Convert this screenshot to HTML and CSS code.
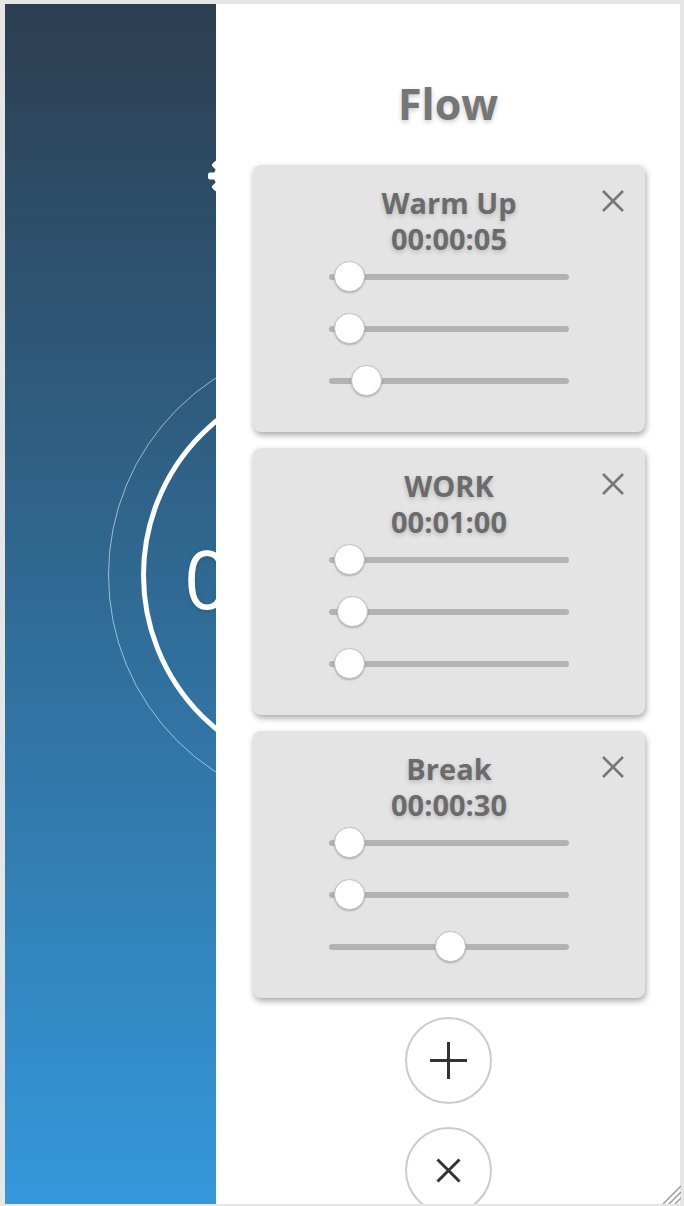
FILE: index.html
```html
<!DOCTYPE html>
<html lang="en">
<head>
  <meta charset="UTF-8" />
  <meta name="viewport" content="width=device-width, initial-scale=1.0" />
  <title>Flow Timer</title>
  <link rel="stylesheet" href="styles.css">
</head>
<body>
  <div class="frame">
    <div class="screen">
      <main class="timer-view">
        <div class="toolbar">
          <svg class="tool-icon" viewBox="0 0 40 40" width="40" height="40">
            <g fill="#fff">
              <circle cx="20" cy="20" r="13" />
              <rect x="16.5" y="1" width="7" height="9" rx="2" />
              <rect x="16.5" y="30" width="7" height="9" rx="2" />
              <rect x="1" y="16.5" width="9" height="7" rx="2" />
              <rect x="30" y="16.5" width="9" height="7" rx="2" />
              <rect x="16.5" y="1" width="7" height="9" rx="2" transform="rotate(45 20 20)" />
              <rect x="16.5" y="30" width="7" height="9" rx="2" transform="rotate(45 20 20)" />
              <rect x="1" y="16.5" width="9" height="7" rx="2" transform="rotate(45 20 20)" />
              <rect x="30" y="16.5" width="9" height="7" rx="2" transform="rotate(45 20 20)" />
            </g>
            <circle cx="20" cy="20" r="5.5" fill="#2e4459" />
          </svg>
          <svg class="tool-icon" viewBox="0 0 40 40" width="40" height="40">
            <path d="M13 8 L32 20 L13 32 Z" fill="#fff" />
          </svg>
          <svg class="tool-icon" viewBox="0 0 40 40" width="40" height="40">
            <path d="M8 12 H32 M8 20 H32 M8 28 H32" stroke="#fff" stroke-width="3" stroke-linecap="round" />
          </svg>
        </div>
        <div class="dial">
          <div class="dial-ring">
            <span class="clock">00:00:05</span>
          </div>
        </div>
      </main>

      <aside class="drawer">
        <h1 class="drawer-title">Flow</h1>

        <div class="step-list">
          <section class="step">
            <button class="step-close" aria-label="Remove">
              <svg viewBox="0 0 24 24" width="24" height="24"><path d="M2 2 L22 22 M22 2 L2 22" /></svg>
            </button>
            <h2 class="step-name">Warm Up</h2>
            <div class="step-time">00:00:05</div>
            <div class="sliders">
              <div class="slider"><div class="slider-track"></div><div class="slider-thumb" style="left: 5px"></div></div>
              <div class="slider"><div class="slider-track"></div><div class="slider-thumb" style="left: 5px"></div></div>
              <div class="slider"><div class="slider-track"></div><div class="slider-thumb" style="left: 21.9px"></div></div>
            </div>
          </section>

          <section class="step">
            <button class="step-close" aria-label="Remove">
              <svg viewBox="0 0 24 24" width="24" height="24"><path d="M2 2 L22 22 M22 2 L2 22" /></svg>
            </button>
            <h2 class="step-name">WORK</h2>
            <div class="step-time">00:01:00</div>
            <div class="sliders">
              <div class="slider"><div class="slider-track"></div><div class="slider-thumb" style="left: 5px"></div></div>
              <div class="slider"><div class="slider-track"></div><div class="slider-thumb" style="left: 8.4px"></div></div>
              <div class="slider"><div class="slider-track"></div><div class="slider-thumb" style="left: 5px"></div></div>
            </div>
          </section>

          <section class="step">
            <button class="step-close" aria-label="Remove">
              <svg viewBox="0 0 24 24" width="24" height="24"><path d="M2 2 L22 22 M22 2 L2 22" /></svg>
            </button>
            <h2 class="step-name">Break</h2>
            <div class="step-time">00:00:30</div>
            <div class="sliders">
              <div class="slider"><div class="slider-track"></div><div class="slider-thumb" style="left: 5px"></div></div>
              <div class="slider"><div class="slider-track"></div><div class="slider-thumb" style="left: 5px"></div></div>
              <div class="slider"><div class="slider-track"></div><div class="slider-thumb" style="left: 106.2px"></div></div>
            </div>
          </section>
        </div>

        <div class="drawer-actions">
          <button class="round-btn" aria-label="Add step">
            <svg viewBox="0 0 37 37" width="37" height="37"><path d="M18.5 0 V37 M0 18.5 H37" /></svg>
          </button>
          <button class="round-btn" aria-label="Close">
            <svg viewBox="0 0 25 25" width="25" height="25"><path d="M1.5 1.5 L23.5 23.5 M23.5 1.5 L1.5 23.5" /></svg>
          </button>
        </div>
      </aside>
    </div>

    <svg class="resize-grip" viewBox="0 0 22 22" width="22" height="22">
      <path d="M22 4 L4 22 M22 10 L10 22 M22 16 L16 22" />
    </svg>
  </div>
</body>
</html>
```

FILE: styles.css
```css
* {
  margin: 0;
  padding: 0;
  box-sizing: border-box;
  font-family: 'Open Sans', 'DejaVu Sans', sans-serif;
}

body {
  background: #e6e6e6;
}

.frame {
  position: relative;
  width: 684px;
  height: 1206px;
  padding: 4px 4px 2px 5px;
}

.screen {
  position: relative;
  width: 675px;
  height: 1200px;
  overflow: hidden;
  background: linear-gradient(to bottom, #2c3e50, #3498db);
}

/* main timer view, mostly hidden by the drawer */

.timer-view {
  display: flex;
  flex-direction: column;
  align-items: center;
  padding-top: 152px;
}

.toolbar {
  display: flex;
  gap: 76px;
  height: 40px;
}

.tool-icon {
  display: block;
}

.dial {
  margin-top: 144px;
  width: 470px;
  height: 470px;
  border-radius: 50%;
  border: 1px solid rgba(255, 255, 255, 0.55);
  display: flex;
  justify-content: center;
  align-items: center;
}

.dial-ring {
  width: 404px;
  height: 404px;
  border-radius: 50%;
  border: 5px solid #fff;
  display: flex;
  justify-content: center;
  align-items: center;
}

.clock {
  color: #fff;
  font-size: 80px;
  font-weight: 400;
  line-height: 1;
  padding-top: 6px;
  text-shadow: 0 1px 4px rgba(0, 0, 0, 0.15);
}

/* flow drawer */

.drawer {
  position: absolute;
  top: 0;
  right: 0;
  bottom: 0;
  width: 464px;
  background: #fff;
  display: flex;
  flex-direction: column;
  align-items: center;
  padding-top: 74px;
  overflow: hidden;
}

.drawer-title {
  font-size: 43px;
  line-height: 52px;
  font-weight: 700;
  color: #767676;
  margin-bottom: 35px;
  text-shadow: 0 2px 5px rgba(0, 0, 0, 0.22);
}

.step-list {
  display: flex;
  flex-direction: column;
  gap: 16px;
  margin-left: 2px;
}

.step {
  position: relative;
  width: 392px;
  height: 267px;
  padding: 20px 0 31px;
  background: #e4e4e4;
  border-radius: 8px;
  box-shadow: 1px 3px 6px rgba(0, 0, 0, 0.35);
  display: flex;
  flex-direction: column;
  align-items: center;
}

.step-name,
.step-time {
  font-size: 29px;
  line-height: 36px;
  font-weight: 700;
  color: #6b6b6b;
  text-shadow: 0 2px 5px rgba(0, 0, 0, 0.2);
}

.step-close {
  position: absolute;
  top: 24px;
  right: 20px;
  width: 24px;
  height: 24px;
  background: none;
  border: none;
  cursor: pointer;
}

.step-close svg {
  display: block;
  stroke: #777;
  stroke-width: 2.6;
  fill: none;
}

.sliders {
  display: flex;
  flex-direction: column;
  gap: 12px;
}

.slider {
  position: relative;
  width: 240px;
  height: 40px;
  display: flex;
  align-items: center;
}

.slider-track {
  width: 100%;
  height: 6px;
  border-radius: 3px;
  background: #b3b3b3;
}

.slider-thumb {
  position: absolute;
  top: 4px;
  width: 31px;
  height: 31px;
  border-radius: 50%;
  background: #fff;
  border: 1px solid #c4c4c4;
  box-shadow: 0 1px 2px rgba(0, 0, 0, 0.25);
}

.drawer-actions {
  display: flex;
  flex-direction: column;
  align-items: center;
  gap: 23px;
  margin-top: 19px;
}

.round-btn {
  width: 87px;
  height: 87px;
  border-radius: 50%;
  border: 2px solid #cccccc;
  background: #fff;
  display: flex;
  justify-content: center;
  align-items: center;
  cursor: pointer;
}

.round-btn svg {
  display: block;
  stroke: #333;
  stroke-width: 3;
  fill: none;
}

.resize-grip {
  position: absolute;
  right: 3px;
  bottom: 2px;
  stroke: #9c9c9c;
  stroke-width: 1.5;
  fill: none;
}
```
